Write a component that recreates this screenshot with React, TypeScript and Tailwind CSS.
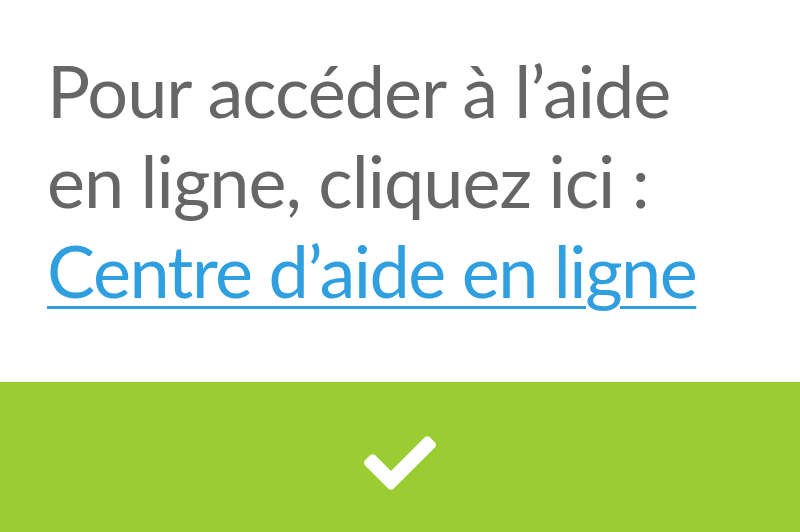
import { FaCheck } from 'react-icons/fa';

export default function App() {
  return (
    <div className="w-[800px] h-[532px] bg-white flex flex-col overflow-hidden" style={{ fontFamily: 'Lato, "Noto Sans", sans-serif' }}>
      <div className="h-[382px] pt-[45px] pl-[47px] pr-[40px]">
        <p className="text-[72px] leading-[90px] tracking-[-1px] text-[#666666]">
          Pour accéder à l’aide
          <br />
          en ligne, cliquez ici :
          <br />
          <a href="#" className="text-[#2f9fdf] tracking-[-1.5px] underline decoration-[3px] underline-offset-[8px]">
            Centre d’aide en ligne
          </a>
        </p>
      </div>
      <button className="h-[150px] w-full bg-[#9acd32] flex items-center justify-center pt-[12px] text-white">
        <FaCheck size={72} />
      </button>
    </div>
  );
}
